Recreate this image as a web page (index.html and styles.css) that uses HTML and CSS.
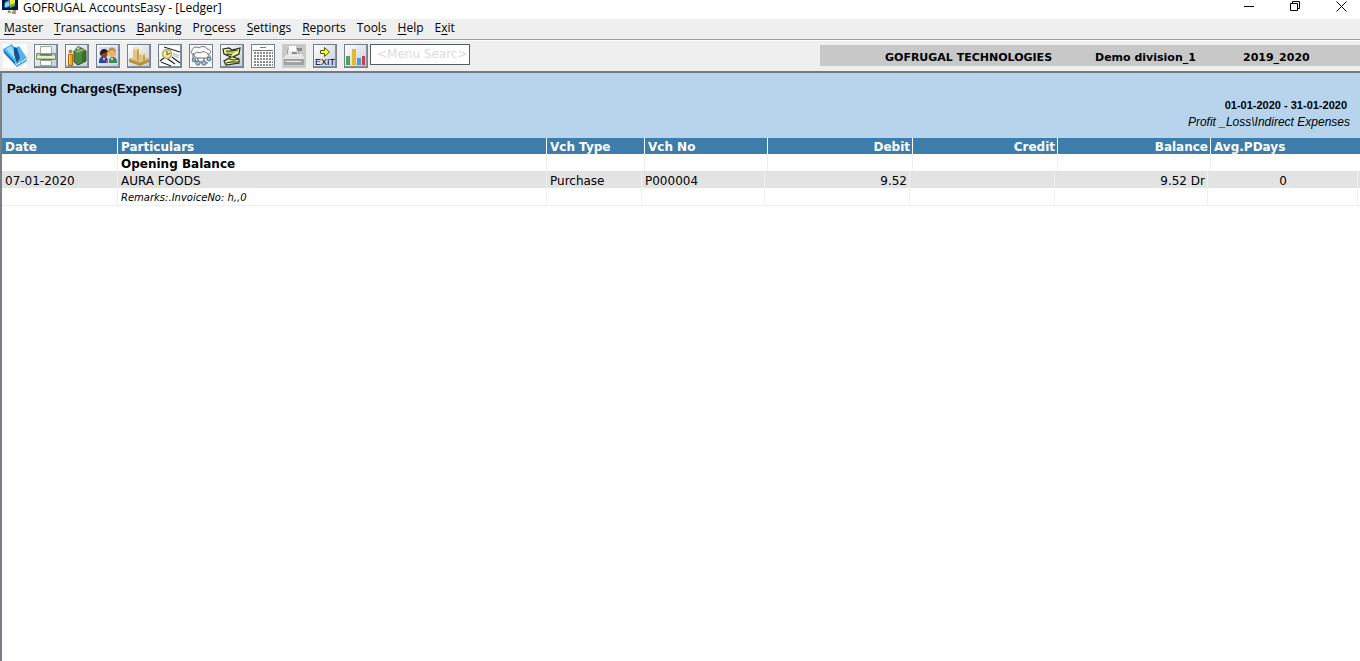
FILE: index.html
```
<!DOCTYPE html>
<html lang="en">
<head>
<meta charset="utf-8">
<title>GOFRUGAL AccountsEasy - [Ledger]</title>
<link rel="stylesheet" href="styles.css">
</head>
<body>
<header class="titlebar">
  <svg class="app-icon" width="17" height="14" viewBox="0 0 17 14" aria-hidden="true"><path fill="#07164f" d="M0 0h16v10H0z"/><path fill="#2f9ae0" d="M3 2l4-2h2v6l-5 2-2-1z"/><path fill="#8fd8ea" d="M3 3l4-1v4l-4 1z"/><path fill="#f0e23c" d="M8 0h5v5H8z"/><path fill="#59b540" d="M8 5l5-2v3l-5 2z"/><path fill="none" stroke="#8c8650" stroke-width="1.4" d="M6 13l1-2 2 2M11 11v3M11 11h3M11 13h3"/></svg>
  <h1 class="title">GOFRUGAL AccountsEasy - [Ledger]</h1>
  <div class="window-controls">
    <button class="win-btn" aria-label="Minimize"><svg width="11" height="11" viewBox="0 0 11 11"><path d="M0 5.500h10"/></svg></button>
    <button class="win-btn" aria-label="Restore"><svg width="11" height="11" viewBox="0 0 11 11"><path d="M.5 2.500h7v7h-7zM2.500 2.500v-2h7v7h-2"/></svg></button>
    <button class="win-btn" aria-label="Close"><svg width="11" height="11" viewBox="0 0 11 11"><path d="M.5.5l10 10M10.500.5l-10 10"/></svg></button>
  </div>
</header>
<nav class="menubar">
  <button class="menu"><u>M</u>aster</button>
  <button class="menu"><u>T</u>ransactions</button>
  <button class="menu"><u>B</u>anking</button>
  <button class="menu">Pr<u>o</u>cess</button>
  <button class="menu"><u>S</u>ettings</button>
  <button class="menu"><u>R</u>eports</button>
  <button class="menu">Too<u>l</u>s</button>
  <button class="menu"><u>H</u>elp</button>
  <button class="menu">E<u>x</u>it</button>
</nav>
<div class="toolbar">
  <div class="tools">
    <button class="tool tool-flat" aria-label="Ledger"><svg viewBox="0 0 24 24"><path fill="#d3dfea" d="M3 10l12 14 9-6-9-9z"/><path fill="#4db7f2" d="M0 5l9-5 3 4 2 13-3 2z"/><path fill="#9bdcfb" d="M3 5l5-3 5 9-1 4z"/><path fill="#1774bd" d="M0 5l12 13 1 4L1 9z"/><path fill="#53b3ec" d="M12 4l4-2 8 12-10 7-2-4z"/><path fill="#15518c" d="M11 3l3 1 3 10-3 5-3-9z"/><path fill="#cceeff" d="M14 20l10-6v2l-10 6z"/><path fill="none" stroke="#1774bd" d="M13 22.500l11-6.500"/></svg></button>
    <button class="tool" aria-label="Print"><svg viewBox="0 0 22 22"><path fill="#fbfdf6" stroke="#9cac90" d="M5.500 1.500h11v7h-11z"/><path fill="#b9c9a4" stroke="#7d906c" d="M1.500 8.500h4v2h11v-2h4v6h-19z"/><path fill="#e6edd8" d="M2 11h18v2H2z"/><path fill="#64785a" d="M5 9h12v1H5zM5 14h12v1H5z"/><path fill="#fbfdf6" stroke="#94a686" d="M5.500 15.500h11v5h-11z"/></svg></button>
    <button class="tool" aria-label="Stock"><svg viewBox="0 0 22 22"><path fill="#4f8742" stroke="#29521f" d="M8 6l8-3 4 3v10l-8 4-4-3z"/><path fill="#85b066" d="M8 6l8-3 3 2-7 3z"/><path fill="#376c2c" d="M16 7l4-1v10l-4 2z"/><path fill="none" stroke="#214619" d="M10 5c0-4 5-4 5-1"/><path fill="#f3a51f" stroke="#ad6914" d="M2.500 9.500h4v11h-4z"/><path fill="#ffdb5d" d="M3 10h1v9H3z"/><circle cx="4.500" cy="6.500" r="2" fill="#bd8440"/></svg></button>
    <button class="tool" aria-label="Customers"><svg viewBox="0 0 22 22"><path fill="#d0dcff" d="M2 2h18v17H2z"/><path fill="#2049a5" d="M2 18c0-6 2-6 5-6s4 1 4 6z"/><circle cx="7" cy="9" r="3.500" fill="#84462b"/><path fill="#33190f" d="M3 10c-1-7 7-8 8-3L7 8z"/><path fill="#3c8754" d="M12 18c0-5 1-6 4-6s4 2 4 6z"/><circle cx="15" cy="8" r="4" fill="#efb163"/><path fill="#c98a3c" d="M11 7c0-6 8-6 8 0l-4-2z"/><path fill="#fff" d="M6 13h2l-1 3zM14 13h2l-1 3z"/><path fill="#bf4f78" d="M9 15h2v3H9z"/></svg></button>
    <button class="tool" aria-label="Inventory"><svg viewBox="0 0 22 22"><path fill="#b59042" d="M1 14l11-2 9 2v3l-9 4-11-4z"/><path fill="#d8b966" d="M1 14l11-3 9 3-9 4z"/><path fill="#dec68a" d="M5 3h5v12H5zM11 8h6v8h-6z"/><path fill="#c2a25a" d="M9 3h2v12H9zM15 8h2v8h-2z"/><ellipse cx="8" cy="3.500" rx="3" ry="1.500" fill="#f1dfa3"/><ellipse cx="14" cy="8.500" rx="3" ry="1.500" fill="#f1dfa3"/></svg></button>
    <button class="tool" aria-label="Due dates"><svg viewBox="0 0 22 22"><path fill="#fff" d="M1 1h20v20H1z"/><path fill="none" stroke="#282828" stroke-width="1.300" d="M5 2l16 5M1 16l5-4 10 7M2 17l10 4M13 12l8 6"/><circle cx="8" cy="9" r="4.500" fill="#f5e9a0" stroke="#b3a667" stroke-width="1.500"/><path fill="none" stroke="#5b5234" d="M8 6v4l3-2"/><path stroke="#a9b0b8" d="M14 10l6 3M14 8l6 3"/></svg></button>
    <button class="tool" aria-label="Network"><svg viewBox="0 0 22 22"><path fill="#fafafa" d="M0 0h22v22H0z"/><g fill="#fff" stroke="#676e73"><path d="M2 6c0-4 5-5 7-3 3-3 8-1 8 1 4 0 5 5 1 5H4C1 9 0 7 2 6z"/><path d="M5 12c-3-4 3-6 5-4 4-3 8 0 8 2 3 0 3 3 0 3H7z"/></g><path stroke="#536474" fill="none" d="M3 9v6M8 13v5M14 13v5M18 11v3M4 16l14 2"/><g fill="#a6c1d4" stroke="#536f85"><circle cx="4" cy="15" r="1.800"/><circle cx="8" cy="18" r="2.200"/><circle cx="14" cy="18" r="2.200"/><circle cx="19" cy="14" r="2"/></g></svg></button>
    <button class="tool" aria-label="Vouchers"><svg viewBox="0 0 22 22"><path fill="#edf39d" stroke="#252b16" stroke-width="1.200" d="M2 4l6-1 3 2 8-2-1 6-6 3 6 2v4l-13 2-2-4 7-4-7-3z"/><path fill="#b9c765" d="M5 6l10 0-4 4-5-1zM6 17l9-2-4 3z"/><path fill="none" stroke="#303817" d="M5 6h5l7-1M5 9l6 1M8 14l5 1 5-1M5 18l5-1h8"/></svg></button>
    <button class="tool" aria-label="Calendar"><svg viewBox="0 0 22 22"><path fill="#fff" d="M0 0h22v22H0z"/><path stroke="#777" d="M8 2.500h6M1 5.500h20"/><path stroke="#8a8a8a" stroke-width="2" stroke-dasharray="2 1" d="M2 8h19M2 11h19M2 14h19M2 17h19M2 20h19"/></svg></button>
    <button class="tool tool-disabled" disabled aria-label="Cash register"><svg viewBox="0 0 22 22"><path fill="#e8e8e8" stroke="#a3a3a3" d="M4.500 4.500l11-1v8h-11z"/><path fill="#fff" d="M6 1h7v5H6z"/><path fill="#8a8a8a" d="M9 7h5v2H9zM14 3h5v3h-5z"/><path fill="#e4e4e4" d="M1 12l3-3h15l2 3v3H1z"/><path fill="#a2a2a2" d="M1 14h20v6H1z"/><path stroke="#eee" d="M3 16.500h15M5 10.500h11"/></svg></button>
    <button class="tool tool-exit" aria-label="Exit"><svg viewBox="0 0 22 22"><path fill="#ffff1c" stroke="#555313" d="M6.500 5.500h4v-3l5 4.500-5 4.500v-3h-4z"/></svg><span class="exit-label">EXIT</span></button>
    <button class="tool" aria-label="Charts"><svg viewBox="0 0 22 22"><path fill="#4ca654" d="M1 11h4v9H1z"/><path fill="#e8b52d" d="M7 4h4v16H7z"/><path fill="#479fd4" d="M12 13h4v7h-4z"/><path fill="#cb3f45" d="M17 11h3v9h-3z"/></svg></button>
  </div>
  <input class="search" type="text" aria-label="Menu search" placeholder="&lt;Menu Searc&gt;">
  <div class="company">
    <span>GOFRUGAL TECHNOLOGIES</span>
    <span>Demo division_1</span>
    <span>2019_2020</span>
  </div>
</div>
<main class="ledger">
  <section class="account">
    <h2 class="account-name">Packing Charges(Expenses)</h2>
    <p class="period">01-01-2020 - 31-01-2020</p>
    <p class="group">Profit _Loss\Indirect Expenses</p>
  </section>
  <table class="entries">
    <thead>
      <tr class="row head"><th>Date</th><th>Particulars</th><th>Vch Type</th><th>Vch No</th><th class="num">Debit</th><th class="num">Credit</th><th class="num">Balance</th><th>Avg.PDays</th></tr>
    </thead>
    <tbody>
      <tr class="row opening"><td></td><td>Opening Balance</td><td></td><td></td><td></td><td></td><td></td><td></td></tr>
      <tr class="row detail shaded"><td>07-01-2020</td><td>AURA FOODS</td><td>Purchase</td><td>P000004</td><td class="num">9.52</td><td></td><td class="num">9.52 Dr</td><td class="mid">0</td></tr>
      <tr class="row detail remarks"><td></td><td>Remarks:.InvoiceNo: h,,0</td><td></td><td></td><td></td><td></td><td></td><td></td></tr>
    </tbody>
  </table>
</main>
</body>
</html>
```
FILE: styles.css
```
* { box-sizing: border-box; }

body {
  margin: 0;
  min-height: 100vh;
  display: flex;
  flex-direction: column;
  background: #fff;
  color: #000;
  font-family: "DejaVu Sans", Verdana, sans-serif;
  font-size: 12px;
}

button { font: inherit; color: inherit; border: 0; padding: 0; background: none; }
h1, h2, p { margin: 0; }

.titlebar {
  display: flex;
  height: 19px;
  padding-left: 2px;
  font-family: "Open Sans", "Noto Sans", sans-serif;
}
.title { margin-left: 4px; font-size: 12px; font-weight: 400; line-height: 16px; }
.window-controls { display: flex; margin-left: auto; }
.win-btn { width: 46px; height: 13px; padding-left: 8px; display: grid; place-items: center; }
.win-btn svg { fill: none; stroke: #000; }

.menubar {
  display: flex;
  gap: 11px;
  height: 21px;
  padding: 0 0 3px 4px;
  background: #efefef;
  border-bottom: 1px solid #999e9e;
  font-family: "Open Sans", "Noto Sans", sans-serif;
}
.menu u { text-underline-offset: 2px; }

.toolbar {
  display: flex;
  align-items: flex-start;
  height: 33px;
  padding: 3px 0 0 3px;
  background: #efefef;
  border-top: 1px solid #fff;
  border-bottom: 2px solid #6f7b87;
}
.tools { display: flex; gap: 7px; }
.tool {
  position: relative;
  width: 24px;
  height: 24px;
  border: 1px solid #73808e;
  background: linear-gradient(135deg, #fff, #c4cad9);
  box-shadow: inset -1px -1px #8393a4;
}
.tool svg { display: block; width: 100%; height: 100%; }
.tool-flat { border: 0; background: #fff; box-shadow: none; }
.tool-disabled { border-color: #ccc; background: #c8c8c8; box-shadow: none; }
.exit-label {
  position: absolute;
  inset: auto 0 0;
  color: #000;
  font: 9px/10px "Liberation Sans", Arial, sans-serif;
  text-align: center;
}
.search {
  width: 100px;
  height: 21px;
  margin-left: 2px;
  padding: 0 0 2px 6px;
  border: 1px solid #555b63;
  background: #fff;
  font: 12px "DejaVu Sans", Verdana, sans-serif;
}
.search::placeholder { color: #dcdcdc; opacity: 1; }
.company {
  display: grid;
  grid-template-columns: 210px 148px auto;
  width: 540px;
  height: 21px;
  margin: 1px 0 0 auto;
  padding-left: 65px;
  background: #c8c8c8;
  font-weight: 700;
  font-size: 11px;
  line-height: 26px;
  white-space: nowrap;
}

.ledger { flex: 1; border-left: 2px solid #7a7f84; }
.account {
  height: 65px;
  padding: 7px 10px 0 5px;
  background: #b8d4ec;
  font-family: "Liberation Sans", Arial, sans-serif;
  text-align: right;
}
.account-name { font-size: 13px; line-height: 17px; text-align: left; }
.period { padding-right: 3px; font-size: 11px; font-weight: 700; line-height: 16px; }
.group { font-size: 12px; font-style: italic; line-height: 18px; }

.entries, .entries thead, .entries tbody { display: block; }
.entries { border-spacing: 0; }
.row {
  display: grid;
  grid-template-columns: 116px 1fr 98px 123px 145px 145px 153px 149px;
  height: 17px;
  line-height: 20px;
  text-align: left;
  white-space: nowrap;
}
.row > * { padding: 0 2px 0 3px; height: 17px; border-right: 1px solid #edf1f4; }
.row > :last-child { border-right: 0; }
.head { height: 16px; background: #3d7dac; color: #fff; line-height: 18px; }
.head > * { height: 16px; border-color: #fff; }
.row > .num { text-align: right; }
.opening { font-weight: 700; }
.detail {
  grid-template-columns: 116px 1fr 95px 123px 145px 145px 153px 150px;
  padding-right: 2px;
}
.detail > :last-child { border-right: 1px solid #edf1f4; }
.shaded { background: #e3e3e3; }
.mid { text-align: center; }
.remarks { height: 18px; border-bottom: 1px solid #edf1f4; font-size: 10px; font-style: italic; }
```
